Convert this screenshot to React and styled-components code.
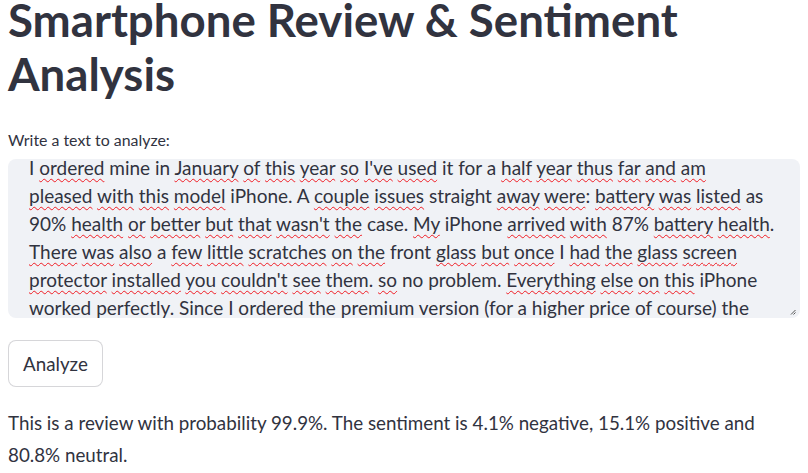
import React from "react";
import styled, { createGlobalStyle } from "styled-components";

const GlobalStyle = createGlobalStyle`
  html, body {
    margin: 0;
    padding: 0;
    background: #ffffff;
  }
  body {
    font-family: Lato, "Noto Sans", sans-serif;
    color: #31333f;
    -webkit-font-smoothing: antialiased;
  }
`;

// "~" marks a word that the browser's spell checker underlines
const reviewLines = [
  "I ~ordered mine in ~January ~of ~this ~year ~so ~I've ~used it for a ~half ~year ~thus ~far ~and ~am",
  "~pleased ~with ~this ~model iPhone. A ~couple ~issues straight ~away ~were: ~battery ~was ~listed as",
  "90% ~health ~or ~better ~but ~that ~wasn't ~the case. ~My iPhone ~arrived ~with 87% ~battery ~health.",
  "~There ~was ~also a ~few ~little ~scratches ~on ~the front ~glass ~but ~once I ~had ~the ~glass ~screen",
  "~protector ~installed ~you ~couldn't ~see ~them. ~so no problem. ~Everything ~else ~on ~this iPhone",
  "~worked ~perfectly. Since I ~ordered ~the ~premium ~version (for a ~higher ~price ~of ~course) ~the",
];

const Page = styled.main`
  padding: 0 8px;
`;

const Title = styled.h1`
  margin: -7px 0 0;
  font-size: 45.6px;
  line-height: 54px;
  font-weight: 700;
`;

const Label = styled.label`
  display: block;
  margin-top: 28px;
  font-size: 15.9px;
  line-height: 22px;
`;

const TextBox = styled.div`
  position: relative;
  margin-top: 8px;
  height: 159px;
  background: #f0f2f6;
  border-radius: 8px;
  overflow: hidden;
`;

const TextContent = styled.div`
  margin-top: -5px;
  padding: 0 21px;
  font-size: 19px;
  line-height: 28px;
`;

const Line = styled.div`
  white-space: nowrap;
`;

const Misspelt = styled.span`
  text-decoration: underline wavy #f01c24;
  text-decoration-thickness: 1.4px;
  text-underline-offset: 3px;
  text-decoration-skip-ink: none;
`;

const ResizeHandle = styled.svg`
  position: absolute;
  right: 4px;
  bottom: 3px;
`;

const Button = styled.button`
  display: flex;
  align-items: center;
  justify-content: center;
  box-sizing: border-box;
  margin-top: 22px;
  height: 47px;
  padding: 0 14px;
  background: #ffffff;
  border: 1px solid rgba(49, 51, 63, 0.2);
  border-radius: 8px;
  font-family: inherit;
  font-size: 18.8px;
  color: #31333f;
  cursor: pointer;
`;

const Result = styled.p`
  margin: 20px 0 0;
  font-size: 18.8px;
  line-height: 32px;
`;

function ReviewLine({ text }) {
  const tokens = text.split(" ");
  return (
    <Line>
      {tokens.map((tok, i) => {
        const sep = i < tokens.length - 1 ? " " : "";
        if (!tok.startsWith("~")) return <React.Fragment key={i}>{tok + sep}</React.Fragment>;
        const m = tok.slice(1).match(/^([A-Za-z']+)(.*)$/);
        return (
          <React.Fragment key={i}>
            <Misspelt>{m[1]}</Misspelt>
            {m[2] + sep}
          </React.Fragment>
        );
      })}
    </Line>
  );
}

export default function App() {
  return (
    <Page>
      <GlobalStyle />
      <Title>
        Smartphone Review &amp; Sentiment
        <br />
        Analysis
      </Title>
      <Label>Write a text to analyze:</Label>
      <TextBox>
        <TextContent>
          {reviewLines.map((l, i) => (
            <ReviewLine key={i} text={l} />
          ))}
        </TextContent>
        <ResizeHandle width="6" height="6" viewBox="0 0 6 6">
          <path d="M5.5 1 L1 5.5 M5.5 3.5 L3.5 5.5" stroke="#555" strokeWidth="1" />
        </ResizeHandle>
      </TextBox>
      <Button>Analyze</Button>
      <Result>
        This is a review with probability 99.9%. The sentiment is 4.1% negative, 15.1% positive and
        80.8% neutral.
      </Result>
    </Page>
  );
}
